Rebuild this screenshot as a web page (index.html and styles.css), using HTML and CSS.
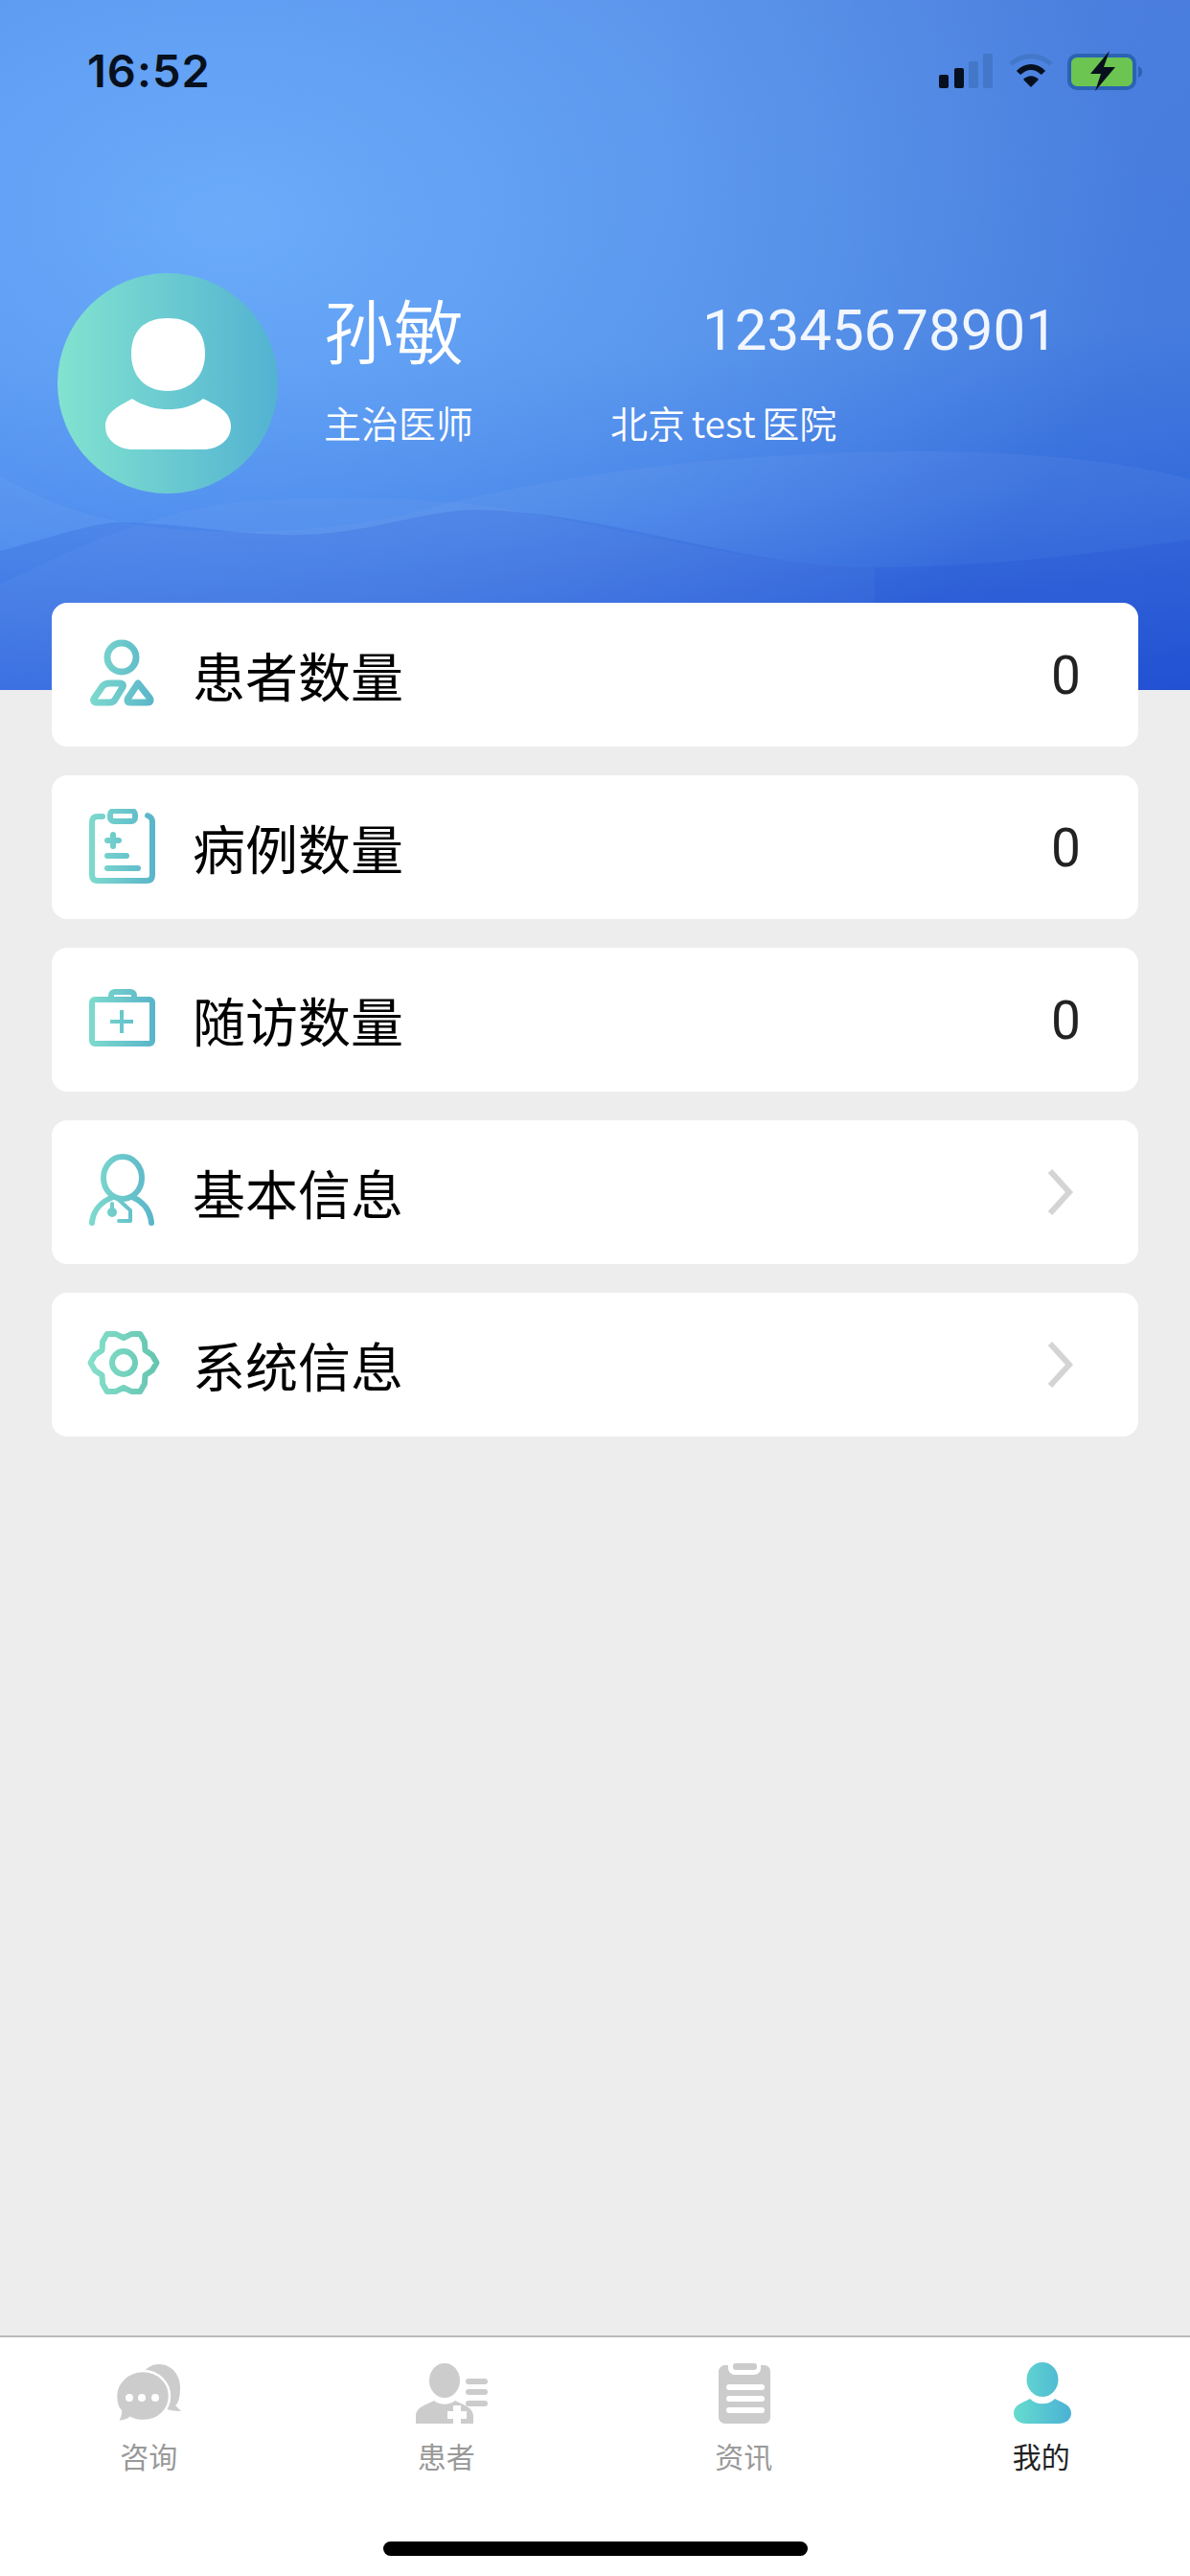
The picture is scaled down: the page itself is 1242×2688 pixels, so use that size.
FILE: index.html
```html
<!DOCTYPE html>
<html lang="zh-CN">
<head>
    <meta charset="UTF-8">
    <meta name="viewport" content="width=device-width, initial-scale=1.0">
    <title>我的</title>
    <link rel="stylesheet" href="styles.css">
</head>
<body>
    <svg class="svg-defs" aria-hidden="true">
        <defs>
            <linearGradient id="teal" gradientUnits="userSpaceOnUse" x1="0" y1="0" x2="80" y2="0">
                <stop offset="0" stop-color="#7fdccd"/>
                <stop offset="1" stop-color="#55b0c9"/>
            </linearGradient>
            <linearGradient id="teal-green" gradientUnits="userSpaceOnUse" x1="0" y1="0" x2="80" y2="0">
                <stop offset="0" stop-color="#86e0cc"/>
                <stop offset="1" stop-color="#62c3ae"/>
            </linearGradient>
            <linearGradient id="teal-tab" gradientUnits="userSpaceOnUse" x1="13" y1="0" x2="72" y2="0">
                <stop offset="0" stop-color="#66dccf"/>
                <stop offset="1" stop-color="#4bb2d4"/>
            </linearGradient>
        </defs>
    </svg>

    <div class="page">
        <header class="header">
            <svg class="waves" viewBox="0 0 1242 720" preserveAspectRatio="none" aria-hidden="true">
                <path class="wave-a" d="M0 497C50 525 100 545 180 552C280 560 380 550 450 530C520 510 660 485 793 477C900 470 1100 462 1242 500V720H0Z"/>
                <path class="wave-c" d="M0 610C80 570 170 530 260 523C340 517 440 518 520 530C640 548 780 590 913 592V720H0Z"/>
                <path class="wave-b" d="M0 575C40 565 80 550 119 545C190 545 250 560 317 558C390 556 440 532 500 532C640 535 770 592 913 592C1040 592 1160 575 1242 563V720H0Z"/>
            </svg>

            <div class="status-bar">
                <span class="time">16:52</span>
                <div class="status-icons">
                    <svg class="signal" viewBox="0 0 58 36" width="58" height="36">
                        <rect x="0" y="22" width="10" height="14" rx="2" fill="#06101f"/>
                        <rect x="16" y="15" width="10" height="21" rx="2" fill="#06101f"/>
                        <rect x="31" y="8" width="10" height="28" rx="2" fill="#4377c9"/>
                        <rect x="46" y="0" width="10" height="36" rx="2" fill="#4377c9"/>
                    </svg>
                    <svg class="wifi" viewBox="0 0 48 36" width="48" height="36">
                        <path d="M3 11C15 0 33 0 45 11" fill="none" stroke="#4377c9" stroke-width="5"/>
                        <path d="M11 20C19 12 29 12 37 20" fill="none" stroke="#06101f" stroke-width="6"/>
                        <path d="M16 27C21 22 27 22 32 27L24 35Z" fill="#06101f"/>
                    </svg>
                    <svg class="battery" viewBox="0 0 78 44" width="78" height="44">
                        <rect x="2" y="6" width="68" height="34" rx="8" fill="#6cc551" stroke="#2c62b4" stroke-width="4"/>
                        <path d="M74 17C77 18 78 20 78 23C78 26 77 28 74 29Z" fill="#2c62b4"/>
                        <path d="M44 1L24 25H35L29 43L50 18H38Z" fill="#07101c"/>
                    </svg>
                </div>
            </div>

            <div class="profile">
                <div class="avatar">
                    <svg viewBox="0 0 230 230" width="230" height="230">
                        <path d="M115 47C140 47 154 60 154 84C154 108 138 123 115 123C92 123 77 108 77 84C77 60 91 47 115 47Z" fill="#fff"/>
                        <path d="M50 160C50 144 66 138 78 131C100 146 132 146 152 131C166 138 181 144 181 160C181 174 168 184 152 184H79C63 184 50 174 50 160Z" fill="#fff"/>
                    </svg>
                </div>
                <div class="info">
                    <div class="info-row">
                        <span class="name">孙敏</span>
                        <span class="phone">12345678901</span>
                    </div>
                    <div class="info-row">
                        <span class="job">主治医师</span>
                        <span class="hospital">北京 test 医院</span>
                    </div>
                </div>
            </div>
        </header>

        <main class="list">
            <div class="card">
                <svg class="card-icon" viewBox="0 0 80 80">
                    <g fill="none" stroke="url(#teal)" stroke-width="7" stroke-linejoin="round">
                        <circle cx="37" cy="22" r="15"/>
                        <path d="M24 49H35C38 49 39 51 38 53L30 66C29 68 27 69 24 69H11C8 69 7 67 8 65L17 52C19 50 21 49 24 49Z"/>
                        <path d="M54 49L66 64C68 67 67 69 64 69H46C43 69 42 67 44 64Z"/>
                    </g>
                </svg>
                <span class="card-label">患者数量</span>
                <span class="card-value">0</span>
            </div>
            <div class="card">
                <svg class="card-icon" viewBox="0 0 80 80">
                    <g fill="none" stroke="url(#teal)" stroke-width="6" stroke-linecap="round" stroke-linejoin="round">
                        <path d="M17 8H12C8 8 6 10 6 14V69C6 73 8 75 12 75H63C67 75 69 73 69 69V14C69 10 67 8 64 7"/>
                        <rect x="25" y="2" width="26" height="11" rx="4"/>
                        <path d="M28 27V39M22 33H34M22 49H42M22 62H54"/>
                    </g>
                </svg>
                <span class="card-label">病例数量</span>
                <span class="card-value">0</span>
            </div>
            <div class="card">
                <svg class="card-icon" viewBox="0 0 80 80">
                    <g fill="none" stroke="url(#teal)" stroke-width="6" stroke-linejoin="round">
                        <rect x="6" y="19" width="63" height="46" rx="3"/>
                        <path d="M26 18V15C26 12 28 11 30 11H46C48 11 50 12 50 15V18"/>
                        <path d="M37 30V54M25 42H49" stroke-width="4"/>
                    </g>
                </svg>
                <span class="card-label">随访数量</span>
                <span class="card-value">0</span>
            </div>
            <div class="card">
                <svg class="card-icon" viewBox="0 0 80 80">
                    <g fill="none" stroke="url(#teal)" stroke-width="6" stroke-linecap="round" stroke-linejoin="round">
                        <ellipse cx="38" cy="25" rx="20" ry="22"/>
                        <path d="M6 72C7 60 15 50 28 45"/>
                        <path d="M68 72C67 60 60 50 48 45"/>
                    </g>
                    <g fill="none" stroke="url(#teal)" stroke-width="4" stroke-linecap="round" stroke-linejoin="round">
                        <path d="M27 61V52M34 48L46 59V70H34"/>
                    </g>
                    <circle cx="27" cy="61" r="5" fill="url(#teal)"/>
                </svg>
                <span class="card-label">基本信息</span>
                <svg class="chevron" viewBox="0 0 32 48" width="32" height="48">
                    <path d="M4 2L24 24L4 46" fill="none" stroke="#d4d4d4" stroke-width="6"/>
                </svg>
            </div>
            <div class="card">
                <svg class="card-icon" viewBox="0 0 80 80">
                    <g fill="none" stroke="url(#teal-green)" stroke-width="6" stroke-linejoin="round">
                        <polygon points="73.5,38 68.9,46 61.5,51 60.9,59.9 56.3,67.9 47,67.9 39,64 31,67.9 21.7,67.9 17.1,59.9 16.5,51 9.1,46 4.5,38 9.1,30 16.5,25 17.1,16.1 21.7,8.1 31,8.1 39,12 47,8.1 56.3,8.1 60.9,16.1 61.5,25 68.9,30"/>
                        <circle cx="39" cy="38" r="12"/>
                    </g>
                </svg>
                <span class="card-label">系统信息</span>
                <svg class="chevron" viewBox="0 0 32 48" width="32" height="48">
                    <path d="M4 2L24 24L4 46" fill="none" stroke="#d4d4d4" stroke-width="6"/>
                </svg>
            </div>
        </main>

        <nav class="tabbar">
            <div class="tabs">
                <div class="tab">
                    <svg viewBox="0 0 90 70" width="90" height="70">
                        <path d="M56 3C69 3 78 14 78 27C78 35 77 43 73 46L79 52C72 52 66 51 62 49C54 52 34 40 34 27C34 14 44 3 56 3Z" fill="#cccccc"/>
                        <path d="M39 10C56 10 67 23 67 36C67 51 55 62 40 62C35 62 30 61 26 59C22 62 18 63 12 63C15 59 16 56 16 52C12 48 11 43 11 36C11 23 23 10 39 10Z" fill="#cccccc" stroke="#fff" stroke-width="2.5"/>
                        <circle cx="25" cy="38" r="4" fill="#fff"/>
                        <circle cx="38" cy="38" r="4" fill="#fff"/>
                        <circle cx="52" cy="38" r="4" fill="#fff"/>
                    </svg>
                    <span class="tab-label">咨询</span>
                </div>
                <div class="tab">
                    <svg viewBox="0 0 90 70" width="90" height="70">
                        <ellipse cx="43" cy="20" rx="16" ry="18" fill="#cccccc"/>
                        <path d="M13 65V57C13 48 24 45 32 41C38 46 48 46 54 41C62 45 73 48 73 57V65Z" fill="#cccccc"/>
                        <path d="M56 46V65M46 56H66" stroke="#fff" stroke-width="8"/>
                        <path d="M68 21H85M68 32H85M68 44H85" stroke="#cccccc" stroke-width="6" stroke-linecap="round"/>
                    </svg>
                    <span class="tab-label">患者</span>
                </div>
                <div class="tab">
                    <svg viewBox="0 0 90 70" width="90" height="70">
                        <path d="M26 4H29V7C29 11 32 14 36 14H56C60 14 63 11 63 7V4H66C71 4 73 7 73 11V58C73 62 71 65 66 65H26C22 65 19 62 19 58V11C19 7 22 4 26 4Z" fill="#cccccc"/>
                        <rect x="34" y="2" width="25" height="7" rx="3" fill="#cccccc"/>
                        <path d="M30 27H64M30 39H64M30 51H64" stroke="#fff" stroke-width="6" stroke-linecap="round"/>
                    </svg>
                    <span class="tab-label">资讯</span>
                </div>
                <div class="tab tab-active">
                    <svg viewBox="0 0 90 70" width="90" height="70">
                        <g transform="translate(3 0)">
                            <ellipse cx="43" cy="19" rx="16.5" ry="18" fill="url(#teal-tab)"/>
                            <path d="M13 54C13 45 23 43 30 39C36 46 50 46 56 39C63 43 73 45 73 54C73 61 67 65 60 65H26C19 65 13 61 13 54Z" fill="url(#teal-tab)"/>
                        </g>
                    </svg>
                    <span class="tab-label">我的</span>
                </div>
            </div>
            <div class="home-bar"></div>
        </nav>
    </div>
</body>
</html>
```

FILE: styles.css
```css
body {
    margin: 0;
    font-family: "Noto Sans CJK SC", "Noto Sans", sans-serif;
    background-color: #ededed;
}

.svg-defs {
    position: absolute;
    width: 0;
    height: 0;
}

.page {
    display: flex;
    flex-direction: column;
    height: 2688px;
    overflow: hidden;
}

/* header */
.header {
    position: relative;
    height: 720px;
    flex-shrink: 0;
    color: #fff;
    background:
        radial-gradient(ellipse 950px 620px at 240px 230px, rgba(114, 180, 255, 0.8), rgba(114, 180, 255, 0.4) 50%, rgba(114, 180, 255, 0) 100%),
        linear-gradient(90deg, rgba(70, 140, 250, 0.25), rgba(70, 140, 250, 0) 55%, rgba(20, 50, 190, 0.12)),
        linear-gradient(178deg, #5288e2 0%, #4c86e2 50%, #3a74e0 72%, #1c50d6 100%);
}

.waves {
    position: absolute;
    top: 0;
    left: 0;
    width: 100%;
    height: 100%;
}

.wave-a {
    fill: rgba(255, 255, 255, 0.045);
}

.wave-c {
    fill: rgba(255, 255, 255, 0.035);
}

.wave-b {
    fill: rgba(22, 70, 205, 0.16);
}

.status-bar {
    position: relative;
    display: flex;
    justify-content: space-between;
    align-items: center;
    height: 44px;
    padding: 52px 50px 0 91px;
}

.time {
    font-family: Inter, sans-serif;
    font-size: 47px;
    font-weight: 600;
    letter-spacing: 1px;
    color: #07101c;
    line-height: 44px;
}

.status-icons {
    display: flex;
    align-items: center;
    gap: 14px;
}

.profile {
    position: relative;
    display: flex;
    align-items: center;
    gap: 48px;
    margin-top: 189px;
    padding-left: 60px;
}

.avatar {
    width: 230px;
    height: 230px;
    border-radius: 50%;
    background: linear-gradient(90deg, #82e3d0, #53b2d1);
}

.avatar svg {
    display: block;
}

.info {
    display: flex;
    flex-direction: column;
    gap: 32px;
    padding-bottom: 36px;
}

.info-row {
    display: flex;
    align-items: center;
}

.name {
    width: 395px;
    font-size: 73px;
    line-height: 84px;
    font-weight: 350;
}

.phone {
    padding-top: 5px;
    font-family: Roboto, sans-serif;
    font-size: 60px;
    color: rgba(255, 255, 255, 0.92);
}

.job {
    width: 299px;
    font-size: 39px;
    line-height: 48px;
    font-weight: 350;
}

.hospital {
    font-size: 39px;
    line-height: 48px;
    font-weight: 350;
    word-spacing: -2px;
}

/* cards */
.list {
    position: relative;
    flex: 1;
    display: flex;
    flex-direction: column;
    gap: 30px;
    margin-top: -91px;
    padding: 0 54px;
}

.card {
    display: flex;
    align-items: center;
    height: 150px;
    padding: 0 60px 0 36px;
    background-color: #fff;
    border-radius: 16px;
}

.card-icon {
    width: 80px;
    height: 80px;
    margin-right: 31px;
    flex-shrink: 0;
}

.card-label {
    flex: 1;
    padding-bottom: 3px;
    font-size: 55px;
    color: #000;
}

.card-value {
    padding-top: 2px;
    font-family: Roboto, sans-serif;
    font-size: 55px;
    color: #222;
}

.chevron {
    display: block;
    margin-right: 4px;
}

/* bottom tabs */
.tabbar {
    flex-shrink: 0;
    height: 249px;
    background-color: #fff;
    border-top: 2px solid #b9b9b9;
}

.tabs {
    display: flex;
    padding-top: 25px;
}

.tab {
    flex: 1;
    display: flex;
    flex-direction: column;
    align-items: center;
}

.tab-label {
    margin-top: 6px;
    font-size: 30px;
    line-height: 44px;
    color: #999;
}

.tab-active .tab-label {
    color: #222;
}

.home-bar {
    width: 443px;
    height: 15px;
    margin: 68px auto 0;
    background-color: #000;
    border-radius: 8px;
}
```
